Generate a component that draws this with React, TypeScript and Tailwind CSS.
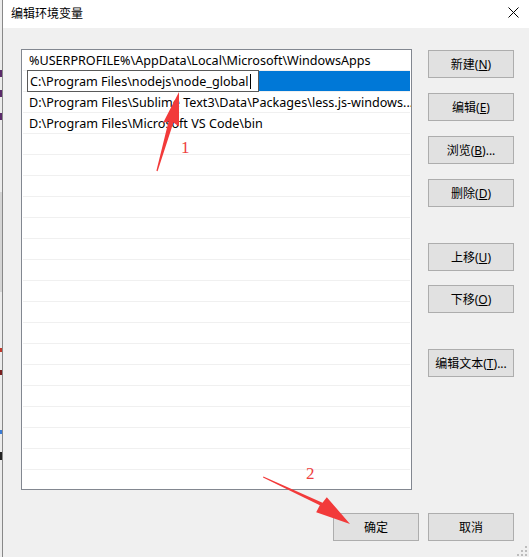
const font = { fontFamily: '"Noto Sans", "Noto Sans CJK SC", sans-serif' };

const rows = [
  "%USERPROFILE%\\AppData\\Local\\Microsoft\\WindowsApps",
  "",
  "D:\\Program Files\\Sublime Text3\\Data\\Packages\\less.js-windows...",
  "D:\\Program Files\\Microsoft VS Code\\bin",
];

function Btn({ label, k, tail = "", className = "" }: { label: string; k?: string; tail?: string; className?: string }) {
  return (
    <div className={"w-[86px] h-[28px] shrink-0 flex items-center justify-center pt-px bg-[#e1e1e1] border border-[#adadad] text-[12px] text-black " + className}>
      <span>
        {label}
        {k && (
          <>
            (<span className="underline">{k}</span>){tail}
          </>
        )}
      </span>
    </div>
  );
}

export default function App() {
  const empty = Array.from({ length: 17 });
  return (
    <div className="relative w-[529px] h-[557px] overflow-hidden flex bg-[#f0f0f0]" style={font}>
      {/* background window glimpse */}
      <div className="relative w-[2px] h-full bg-[#ececec]">
        <div className="absolute left-0 top-[70px] w-[2px] h-[7px] bg-[#5a2a6a]" />
        <div className="absolute left-0 top-[90px] w-[2px] h-[7px] bg-[#5a2a6a]" />
        <div className="absolute left-0 top-[113px] w-[2px] h-[7px] bg-[#5a2a6a]" />
        <div className="absolute left-0 top-[192px] w-[2px] h-[100px] bg-[#d4d4d4]" />
        <div className="absolute left-0 top-[348px] w-[2px] h-[4px] bg-[#c0392b]" />
        <div className="absolute left-0 top-[370px] w-[2px] h-[5px] bg-[#7a1f1f]" />
        <div className="absolute left-0 top-[430px] w-[2px] h-[4px] bg-[#3a7bd5]" />
        <div className="absolute left-0 top-[452px] w-[2px] h-[8px] bg-[#222]" />
      </div>

      <div className="flex-1 flex flex-col border-l border-[#888]">
        {/* title bar */}
        <div className="h-[28px] bg-white flex items-center justify-between pl-[8px] pr-[10px]">
          <span className="text-[12px] text-black">编辑环境变量</span>
          <svg width="11" height="11" viewBox="0 0 11 11" className="-mt-[4px]">
            <path d="M0.5 0.5 L10.5 10.5 M10.5 0.5 L0.5 10.5" stroke="#000" strokeWidth="1" />
          </svg>
        </div>

        {/* body */}
        <div className="flex-1 flex flex-col pl-[18px] pt-[21px]">
          <div className="flex gap-[16px]">
            <div className="w-[391px] h-[441px] bg-white border border-[#828790] overflow-hidden text-[12.6px] text-black">
              {rows.map((r, i) =>
                i === 1 ? (
                  <div key={i} className="h-[21px] flex mx-px border-b border-[#f0f0f0]">
                    <div className="w-[4px] bg-white" />
                    <div className="relative w-[232px] h-[22px] -mt-px bg-white border border-[#5a5a5a] flex items-center pl-[2px] pt-[2px]">
                      <span className="whitespace-nowrap">C:\Program Files\nodejs\node_global</span>
                      <span className="ml-px w-px h-[15px] -mt-[2px] bg-black" />
                    </div>
                    <div className="flex-1 bg-[#0078d7]" />
                  </div>
                ) : (
                  <div key={i} className="h-[21px] flex items-center mx-px pl-[6px] pt-[3px] border-b border-[#f0f0f0]">
                    <span className="whitespace-nowrap">{r}</span>
                  </div>
                )
              )}
              {empty.map((_, i) => (
                <div key={"e" + i} className="h-[21px] mx-px border-b border-[#f0f0f0]" />
              ))}
            </div>

            <div className="flex flex-col pt-px">
              <Btn label="新建" k="N" />
              <Btn label="编辑" k="E" className="mt-[15px]" />
              <Btn label="浏览" k="B" tail="..." className="mt-[15px]" />
              <Btn label="删除" k="D" className="mt-[15px]" />
              <Btn label="上移" k="U" className="mt-[36px]" />
              <Btn label="下移" k="O" className="mt-[14px]" />
              <Btn label="编辑文本" k="T" tail="..." className="mt-[36px]" />
            </div>
          </div>

          <div className="flex justify-end gap-[9px] mt-[23px] pr-[15px]">
            <Btn label="确定" />
            <Btn label="取消" />
          </div>
        </div>
      </div>

      {/* resize grip */}
      <svg className="absolute right-[2px] bottom-[1px]" width="10" height="10" viewBox="0 0 10 10">
        <g fill="#bdbdbd">
          <rect x="8" y="0" width="2" height="2" />
          <rect x="4" y="4" width="2" height="2" />
          <rect x="8" y="4" width="2" height="2" />
          <rect x="0" y="8" width="2" height="2" />
          <rect x="4" y="8" width="2" height="2" />
          <rect x="8" y="8" width="2" height="2" />
        </g>
      </svg>

      {/* annotations */}
      <svg className="absolute inset-0 pointer-events-none" width="529" height="557">
        <polygon
          fill="#f23a3a"
          points="156.4,170.8 168.6,121.3 163.0,123.0 179,92 179.0,126.6 173.4,122.5 157.6,171.2"
        />
        <polygon
          fill="#f23a3a"
          points="263,477.5 319.8,505.2 316.2,512.3 350,524 326.8,497.2 322.5,502.7 263.4,476.6"
        />
      </svg>
      <span className="absolute left-[181px] top-[139px] text-[17px] text-[#ee4040] leading-none" style={{ fontFamily: '"Liberation Serif", serif' }}>1</span>
      <span className="absolute left-[306px] top-[465px] text-[17px] text-[#ee4040] leading-none" style={{ fontFamily: '"Liberation Serif", serif' }}>2</span>
    </div>
  );
}
